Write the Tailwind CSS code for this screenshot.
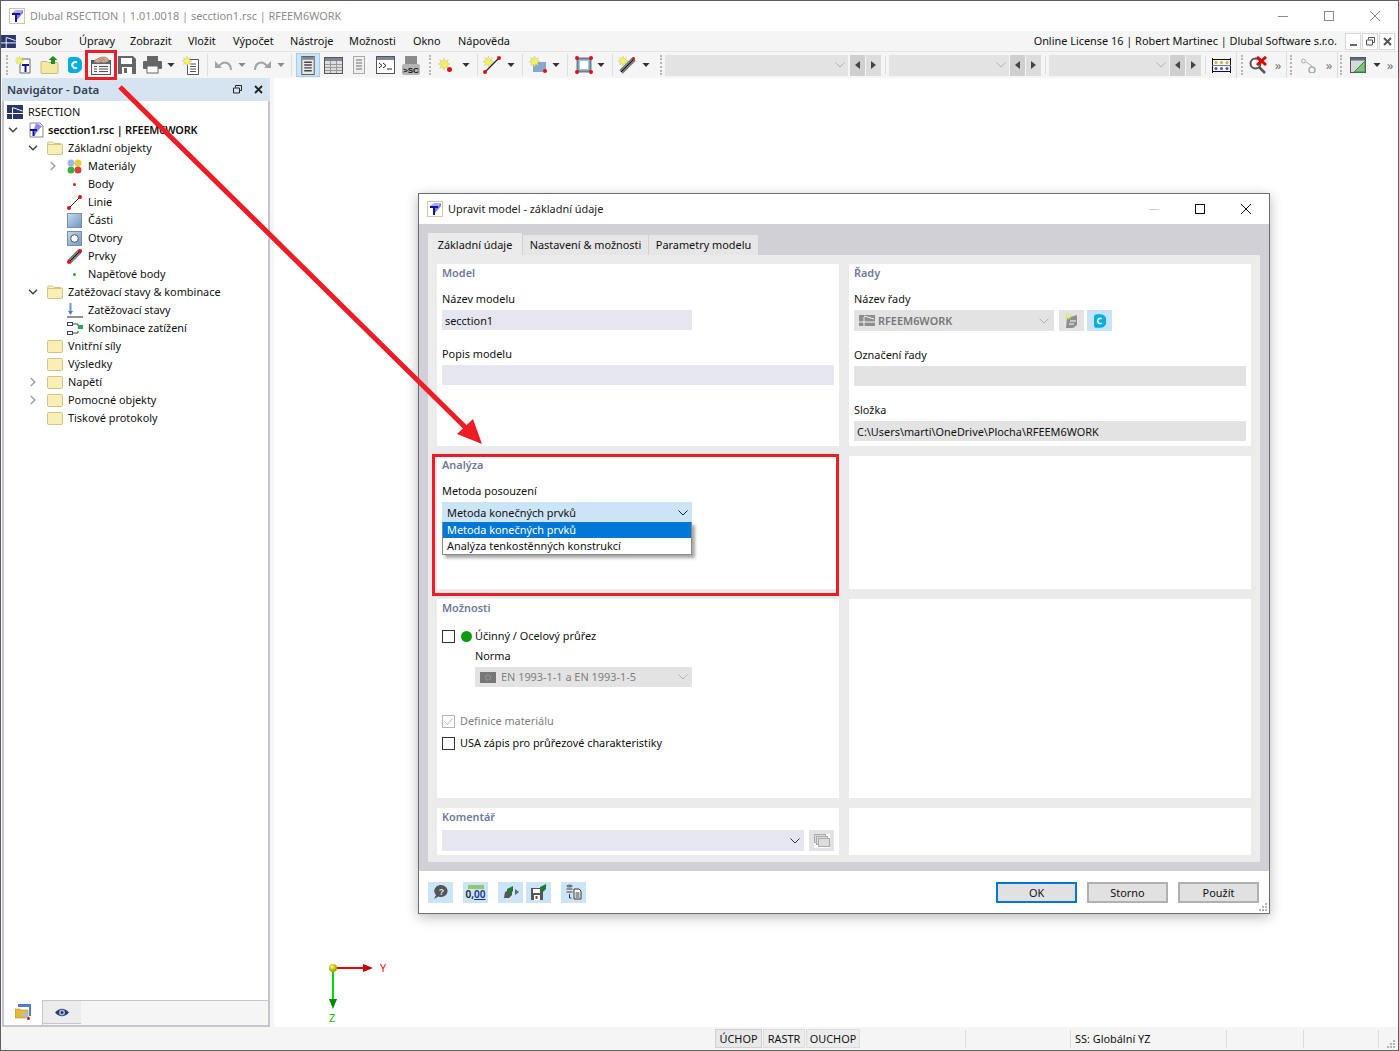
<!DOCTYPE html>
<html lang="cs">
  <head>
    <meta charset="UTF-8" />
    <meta name="viewport" content="width=device-width, initial-scale=1.0" />
    <script src="https://cdn.jsdelivr.net/npm/@tailwindcss/browser@4"></script>
    <title>Dlubal RSECTION</title>
  </head>
  <body class="overflow-hidden">
    <!-- shared icons -->
    <svg class="hidden">
      <symbol id="folder" viewBox="0 0 16 14"><path d="M.5 2.500q0-1 1-1h13q1 0 1 1v10q0 1-1 1h-13q-1 0-1-1z" fill="#f9efb4" stroke="#cfc38a"/></symbol>
      <symbol id="folderopen" viewBox="0 0 16 14"><path d="M.5 2q0-1 1-1h4l1.500 1.500h6.500q1 0 1 1v1.500h-11l-1 0z" fill="#fbf5cf" stroke="#cfc38a"/><path d="M.5 3.500h14.500q.5 0 .5 1v8.500q0 .5-.5.500h-13.500q-1 0-1-1z" fill="#f9efb4" stroke="#cfc38a"/></symbol>
      <symbol id="flag" viewBox="0 0 16 14"><rect width="16" height="14" y="0" fill="#28386e"/><path d="M0 8.500h16M5.500 3v11M5.500 2.500l10 3.500" stroke="#fff" fill="none"/></symbol>
      <symbol id="tlogo" viewBox="0 0 16 16"><rect x=".5" y=".5" width="15" height="15" fill="#fff" stroke="#dcc4a0"/><path d="M3 5l4-3h7l-3 3z" fill="#a9aaf0"/><path d="M11 5l3-3v3l-6 7V7z" fill="#7b7ce0"/><path d="M3 5h8v2H8v7H6V7H3z" fill="#16169c"/></symbol>
      <symbol id="dd" viewBox="0 0 9 5"><path d="M0 0h9L4.500 5z" fill="#333"/></symbol>
      <symbol id="ddg" viewBox="0 0 9 5"><path d="M0 0h9L4.500 5z" fill="#8a8a8a"/></symbol>
      <symbol id="chev" viewBox="0 0 10 6"><path d="M.5.500l4.500 4.500 4.500-4.500" fill="none" stroke="currentColor" stroke-width="1"/></symbol>
      <symbol id="treedown" viewBox="0 0 10 6"><path d="M1 .8l4 4 4-4" fill="none" stroke="#444" stroke-width="1.500"/></symbol>
      <symbol id="treeright" viewBox="0 0 6 10"><path d="M.8 1l4 4-4 4" fill="none" stroke="#a0a0a0" stroke-width="1.500"/></symbol>
      <symbol id="star" viewBox="0 0 14 14"><path d="M7 0l1.500 4L12 2l-1.500 3.500L14 7l-3.500 1.500L12 12 8.500 10.500 7 14l-1.500-3.500L2 12l1.500-3.500L0 7l3.500-1.500L2 2l3.500 2z" fill="#f6f25a" stroke="#b7b7a0" stroke-width=".5"/></symbol>
      <symbol id="cloud" viewBox="0 0 14 16"><path d="M3 0h5a6.500 8 0 0 1 0 16H3q-3 0-3-3V3q0-3 3-3z" fill="#00aee6"/><path d="M9 5.500a3 3 0 1 0 0 5" fill="none" stroke="#fff" stroke-width="2"/></symbol>
      <symbol id="save" viewBox="0 0 18 18"><path d="M0 0h15l3 3v15H0z" fill="#666"/><rect x="3" y="2" width="11" height="6" fill="#fff"/><rect x="4" y="11" width="10" height="7" fill="#fff"/><rect x="6" y="12" width="3" height="5" fill="#666"/></symbol>
      <symbol id="winlist" viewBox="0 0 14 20"><rect x=".5" y=".5" width="13" height="19" fill="#e9e9e9" stroke="#555"/><rect x="1" y="1" width="12" height="3" fill="#7d8896"/><path d="M3 6.500h8M3 9.500h8M3 12.500h8M3 15.500h8" stroke="#444" stroke-width="1.500"/></symbol>
      <symbol id="red" viewBox="0 0 4 4"><circle cx="2" cy="2" r="2" fill="#e01010"/></symbol>
    </svg>

    <div class="relative w-[1399px] h-[1051px] border border-[#5f5f5f] bg-[#f5f5f5] font-['Noto_Sans','Open_Sans',sans-serif] text-[10.9px] leading-[12px] text-[#111] flex flex-col overflow-hidden">
      <!-- title bar -->
      <div class="h-[30px] shrink-0 bg-white flex items-center pl-[8px]">
        <svg class="w-4 h-4 shrink-0"><use href="#tlogo" /></svg>
        <span class="ml-[5px] text-[#8c8c8c]">Dlubal RSECTION | 1.01.0018 | secction1.rsc | RFEEM6WORK</span>
        <div class="ml-auto flex items-center text-[#777]">
          <svg class="w-[46px] h-[12px]" viewBox="0 0 46 12"><path d="M18 6.500h10" stroke="#8a8a8a"/></svg>
          <svg class="w-[46px] h-[12px]" viewBox="0 0 46 12"><rect x="18.500" y="1.500" width="9" height="9" fill="none" stroke="#8a8a8a"/></svg>
          <svg class="w-[46px] h-[12px]" viewBox="0 0 46 12"><path d="M18 1l10 10M28 1L18 11" stroke="#8a8a8a"/></svg>
        </div>
      </div>

      <!-- menu bar -->
      <div class="h-[20px] shrink-0 flex items-center border-b border-[#e4e4e4] box-content">
        <svg class="w-[17px] h-[13px] shrink-0 -ml-px"><use href="#flag" /></svg>
        <div class="ml-[8px] flex">
          <span class="w-[54px]">Soubor</span><span class="w-[51px]">Úpravy</span><span class="w-[58px]">Zobrazit</span><span class="w-[45px]">Vložit</span><span class="w-[57px]">Výpočet</span><span class="w-[59px]">Nástroje</span><span class="w-[64px]">Možnosti</span><span class="w-[45px]">Okno</span><span>Nápověda</span>
        </div>
        <span class="ml-auto">Online License 16 | Robert Martinec | Dlubal Software s.r.o.</span>
        <div class="flex ml-[8px] mr-[3px] gap-px">
          <div class="w-[16px] h-[17px] border border-[#d8d8d8] bg-white flex items-end justify-center pb-[3px]"><i class="w-[7px] h-[2px] bg-[#666]"></i></div>
          <div class="w-[16px] h-[17px] border border-[#d8d8d8] bg-white flex items-center justify-center"><svg class="w-[9px] h-[9px]" viewBox="0 0 9 9"><path d="M2.500 2.500V.5h6v5h-2M.5 3h6v5h-6z" fill="none" stroke="#555"/></svg></div>
          <div class="w-[16px] h-[17px] border border-[#d8d8d8] bg-white flex items-center justify-center"><svg class="w-[9px] h-[9px]" viewBox="0 0 9 9"><path d="M1 1l7 7M8 1L1 8" stroke="#555" stroke-width="2"/></svg></div>
        </div>
      </div>

      <!-- toolbar -->
      <div class="h-[26px] shrink-0 flex items-center *:shrink-0">
        <div class="w-[11px] flex justify-center"><i class="w-[2px] h-[20px] border-l-2 border-dotted border-[#b5b5b5]"></i></div>
        <div class="w-[24px] flex justify-center"><svg class="w-[18px] h-[18px]" viewBox="0 0 18 18"><path d="M5 3h10v14H5z" fill="#fff" stroke="#666"/><path d="M7 8h7v2h-2.500v6h-2v-6H7z" fill="#16169c"/><use href="#star" width="9" height="9" x="0" y="0"/></svg></div>
        <div class="w-[26px] flex justify-center"><svg class="w-[19px] h-[18px]" viewBox="0 0 19 18"><path d="M1 6.500q0-1 1-1h5l1 1h9q1 0 1 1v9q0 1-1 1H2q-1 0-1-1z" fill="#f4e9a3" stroke="#c7bb7e"/><path d="M11 8V4H8.500L13 0l4.500 4H15v4z" fill="#1e8e1e"/></svg></div>
        <div class="w-[26px] flex justify-center"><svg class="w-[14px] h-[16px]"><use href="#cloud" /></svg></div>
        <div class="w-[25px] flex justify-center"><svg class="w-[20px] h-[19px]" viewBox="0 0 20 19"><rect x=".5" y="4.500" width="19" height="14" fill="#f2f2f2" stroke="#555"/><rect x="1" y="5" width="18" height="3" fill="#52677f"/><path d="M3 10.500h3M3 13h3M3 15.500h3M8 10.500h9M8 13h9M8 15.500h9" stroke="#555" stroke-width="1.200"/><path d="M3 6q0-2 3-3 3-2 6-2 3 0 4 1l2 2q0 2-2 2l-3 1-3-1-3 1-3-.5z" fill="#cda98d" stroke="#8c6e56" stroke-width=".6"/><path d="M8 3l3 2M11 2.500l3 2" stroke="#8c6e56" stroke-width=".6"/></svg></div>
        <div class="w-[28px] flex justify-center"><svg class="w-[18px] h-[18px]"><use href="#save" /></svg></div>
        <div class="w-[22px] flex justify-center"><svg class="w-[19px] h-[18px]" viewBox="0 0 19 18"><rect x="4" y="0" width="11" height="5" fill="#666"/><rect x="0" y="5" width="19" height="8" rx="1" fill="#666"/><rect x="4" y="10" width="11" height="7" fill="#fff" stroke="#666"/></svg></div>
        <div class="w-[16px] flex justify-center"><svg class="w-[8px] h-[4px]"><use href="#dd" /></svg></div>
        <div class="w-[24px] flex justify-center"><svg class="w-[18px] h-[19px]" viewBox="0 0 18 19"><path d="M5.500 3.500h11v15h-11z" fill="#fff" stroke="#555"/><path d="M8 8h6M8 10.500h6M8 13h6M8 15.500h6" stroke="#555"/><use href="#star" width="10" height="10" x="0" y="0"/></svg></div>
        <div class="w-[8px] flex justify-center"><i class="w-px h-[22px] bg-[#dedede]"></i></div>
        <div class="w-[24px] flex justify-center"><svg class="w-[17px] h-[11px]" viewBox="0 0 17 11"><path d="M4 6q4-5 8-3t4 7" fill="none" stroke="#a3a3a3" stroke-width="2"/><path d="M0 1v7h7z" fill="#a3a3a3"/></svg></div>
        <div class="w-[14px] flex justify-center"><svg class="w-[8px] h-[4px]"><use href="#ddg" /></svg></div>
        <div class="w-[26px] flex justify-center"><svg class="w-[17px] h-[11px]" viewBox="0 0 17 11"><path d="M13 6Q9 1 5 3t-4 7" fill="none" stroke="#a3a3a3" stroke-width="2"/><path d="M17 1v7h-7z" fill="#a3a3a3"/></svg></div>
        <div class="w-[11px] flex justify-center"><svg class="w-[8px] h-[4px]"><use href="#ddg" /></svg></div>
        <div class="w-[10px] flex justify-center"><i class="w-px h-[22px] bg-[#dedede]"></i></div>
        <div class="w-[24px] h-[24px] bg-[#cce4f7] border border-[#a3cdef] flex justify-center items-center"><svg class="w-[14px] h-[19px]"><use href="#winlist" /></svg></div>
        <div class="w-[26px] flex justify-center"><svg class="w-[19px] h-[17px]" viewBox="0 0 19 17"><rect x=".5" y=".5" width="18" height="16" fill="#ddd" stroke="#555"/><rect x="1" y="1" width="17" height="3" fill="#7d8896"/><path d="M1 7.500h17M1 10.500h17M1 13.500h17M6.500 4v12M12.500 4v12" stroke="#999"/></svg></div>
        <div class="w-[26px] flex justify-center"><svg class="w-[12px] h-[18px]" viewBox="0 0 12 18"><rect x=".5" y=".5" width="11" height="17" fill="#eee" stroke="#aaa"/><path d="M3 4h6M3 7h6M3 10h6M3 13h6" stroke="#999" stroke-width="1.500"/></svg></div>
        <div class="w-[26px] flex justify-center"><svg class="w-[19px] h-[18px]" viewBox="0 0 19 18"><rect x=".5" y=".5" width="18" height="17" fill="#fff" stroke="#555"/><rect x="1" y="1" width="17" height="3" fill="#7d8896"/><path d="M3 7l3 2.500L3 12M7 7l3 2.500L7 12M11 13h5" fill="none" stroke="#222"/></svg></div>
        <div class="w-[26px] flex justify-center"><svg class="w-[18px] h-[19px]" viewBox="0 0 18 19"><rect x="3" y="0" width="12" height="10" fill="#8b8b8b"/><rect x="0" y="8" width="18" height="11" rx="2" fill="#b5b5b5"/><text x="9" y="17" text-anchor="middle" font-size="8" font-weight="700" fill="#111" font-family="Liberation Sans">&gt;SC</text></svg></div>
        <div class="w-[12px] flex justify-center"><i class="w-[2px] h-[20px] border-l-2 border-dotted border-[#b5b5b5]"></i></div>
        <div class="w-[18px] flex justify-center"><svg class="w-[15px] h-[15px]" viewBox="0 0 15 15"><use href="#star" width="12" height="12"/><use href="#red" x="9" y="9" width="5" height="5"/></svg></div>
        <div class="w-[20px] pl-[4px] flex justify-center"><svg class="w-[8px] h-[4px]"><use href="#dd" /></svg></div>
        <div class="w-[6px] flex justify-center"><i class="w-px h-[22px] bg-[#dedede]"></i></div>
        <div class="w-[24px] flex justify-center"><svg class="w-[18px] h-[18px]" viewBox="0 0 18 18"><use href="#star" width="11" height="11"/><path d="M2 16L16 2" stroke="#222" stroke-width="1.300"/><use href="#red" x="0" y="14" width="4" height="4"/><use href="#red" x="14" y="0" width="4" height="4"/></svg></div>
        <div class="w-[14px] flex justify-center"><svg class="w-[8px] h-[4px]"><use href="#dd" /></svg></div>
        <div class="w-[8px] flex justify-center"><i class="w-px h-[22px] bg-[#dedede]"></i></div>
        <div class="w-[24px] flex justify-center"><svg class="w-[18px] h-[18px]" viewBox="0 0 18 18"><rect x="4" y="6" width="13" height="10" fill="#86a9cf"/><use href="#star" width="11" height="11"/><use href="#red" x="14" y="13" width="4" height="4"/></svg></div>
        <div class="w-[12px] flex justify-center"><svg class="w-[8px] h-[4px]"><use href="#dd" /></svg></div>
        <div class="w-[10px] flex justify-center"><i class="w-px h-[22px] bg-[#dedede]"></i></div>
        <div class="w-[24px] flex justify-center"><svg class="w-[18px] h-[18px]" viewBox="0 0 18 18"><rect x="2.500" y="2.500" width="13" height="13" fill="#9fc0dd" stroke="#6b7f92" stroke-width="2"/><rect x="5" y="5" width="8" height="8" fill="#fff"/><use href="#red" x="0" y="0" width="4" height="4"/><use href="#red" x="14" y="0" width="4" height="4"/><use href="#red" x="0" y="14" width="4" height="4"/><use href="#red" x="14" y="14" width="4" height="4"/></svg></div>
        <div class="w-[10px] flex justify-center"><svg class="w-[8px] h-[4px]"><use href="#dd" /></svg></div>
        <div class="w-[12px] flex justify-center"><i class="w-px h-[22px] bg-[#dedede]"></i></div>
        <div class="w-[18px] flex justify-center"><svg class="w-[18px] h-[18px]" viewBox="0 0 18 18"><use href="#star" width="10" height="10"/><path d="M3 16L16 3" stroke="#777" stroke-width="5"/><path d="M3 16L16 3" stroke="#111"/><use href="#red" x="14" y="1" width="3" height="3"/></svg></div>
        <div class="w-[20px] flex justify-center"><svg class="w-[8px] h-[4px]"><use href="#dd" /></svg></div>
        <div class="w-[9px] flex justify-center"><i class="w-[2px] h-[20px] border-l-2 border-dotted border-[#b5b5b5]"></i></div>

        <div class="w-[183px] h-[21px] bg-[#e3e3e3] flex items-center justify-end pr-[2px] text-[#b0b0b0]"><svg class="w-[10px] h-[6px] mr-[1px]"><use href="#chev" /></svg></div>
        <div class="ml-[2px] w-[15px] h-[21px] bg-[#cfcfcf] flex items-center justify-center"><svg class="w-[5px] h-[8px]" viewBox="0 0 5 8"><path d="M5 0v8L0 4z" fill="#444"/></svg></div>
        <div class="ml-px w-[15px] h-[21px] bg-[#dcdcdc] flex items-center justify-center"><svg class="w-[5px] h-[8px]" viewBox="0 0 5 8"><path d="M0 0v8l5-4z" fill="#444"/></svg></div>
        <div class="w-[8px] flex justify-center"><i class="w-px h-[18px] bg-[#dedede]"></i></div>
        <div class="w-[120px] h-[21px] bg-[#e3e3e3] flex items-center justify-end pr-[2px] text-[#b0b0b0]"><svg class="w-[10px] h-[6px] mr-[1px]"><use href="#chev" /></svg></div>
        <div class="ml-px w-[15px] h-[21px] bg-[#cfcfcf] flex items-center justify-center"><svg class="w-[5px] h-[8px]" viewBox="0 0 5 8"><path d="M5 0v8L0 4z" fill="#444"/></svg></div>
        <div class="ml-px w-[15px] h-[21px] bg-[#dcdcdc] flex items-center justify-center"><svg class="w-[5px] h-[8px]" viewBox="0 0 5 8"><path d="M0 0v8l5-4z" fill="#444"/></svg></div>
        <div class="w-[8px] flex justify-center"><i class="w-px h-[18px] bg-[#dedede]"></i></div>
        <div class="w-[120px] h-[21px] bg-[#e3e3e3] flex items-center justify-end pr-[2px] text-[#b0b0b0]"><svg class="w-[10px] h-[6px] mr-[1px]"><use href="#chev" /></svg></div>
        <div class="ml-px w-[15px] h-[21px] bg-[#cfcfcf] flex items-center justify-center"><svg class="w-[5px] h-[8px]" viewBox="0 0 5 8"><path d="M5 0v8L0 4z" fill="#444"/></svg></div>
        <div class="ml-px w-[15px] h-[21px] bg-[#dcdcdc] flex items-center justify-center"><svg class="w-[5px] h-[8px]" viewBox="0 0 5 8"><path d="M0 0v8l5-4z" fill="#444"/></svg></div>
        <div class="w-[8px] flex justify-center"><i class="w-px h-[18px] bg-[#dedede]"></i></div>
        <div class="w-[26px] flex justify-center"><svg class="w-[19px] h-[15px] -ml-[2px]" viewBox="0 0 19 15"><path d="M.5 0v15M18.500 0v15M0 1.500h19M0 13.500h19" stroke="#111"/><path d="M0 7.500h19" stroke="#777"/><g fill="#c8b23c"><circle cx="4" cy="4.500" r="1.500"/><circle cx="9.500" cy="4.500" r="1.500"/><circle cx="15" cy="4.500" r="1.500"/></g><g fill="#3e57c4"><circle cx="4" cy="10.500" r="1.500"/><circle cx="9.500" cy="10.500" r="1.500"/><circle cx="15" cy="10.500" r="1.500"/></g></svg></div>
        <div class="w-[3px] flex justify-center"><i class="w-px h-[26px] bg-[#dedede]"></i></div>
        <div class="w-[7px] flex justify-center"><i class="w-[2px] h-[20px] border-l-2 border-dotted border-[#b5b5b5]"></i></div>
        <div class="w-[26px] flex justify-center"><svg class="w-[19px] h-[18px]" viewBox="0 0 19 18"><circle cx="6.500" cy="7.500" r="5" fill="#fff" stroke="#555" stroke-width="2"/><path d="M10 11l6 6" stroke="#555" stroke-width="2.500"/><path d="M8 1l9 8M17 1L8 9" stroke="#e00000" stroke-width="3"/></svg></div>
        <span class="w-[14px] text-center text-[#777] text-[13px]">»</span>
        <div class="w-[3px] flex justify-center"><i class="w-px h-[26px] bg-[#dedede]"></i></div>
        <div class="w-[6px] flex justify-center"><i class="w-[2px] h-[20px] border-l-2 border-dotted border-[#b5b5b5]"></i></div>
        <div class="w-[28px] flex justify-center"><svg class="w-[15px] h-[15px]" viewBox="0 0 15 15"><circle cx="2.500" cy="3" r="2" fill="none" stroke="#aaa"/><circle cx="11" cy="12" r="3" fill="none" stroke="#aaa" stroke-width="1.500"/><path d="M5 4l6 4" stroke="#aaa"/></svg></div>
        <span class="w-[14px] text-center text-[#777] text-[13px]">»</span>
        <div class="w-[2px] flex justify-center"><i class="w-px h-[26px] bg-[#dedede]"></i></div>
        <div class="w-[6px] flex justify-center"><i class="w-[2px] h-[20px] border-l-2 border-dotted border-[#b5b5b5]"></i></div>
        <div class="w-[28px] flex justify-center"><svg class="w-[16px] h-[16px]" viewBox="0 0 16 16"><rect x=".5" y=".5" width="15" height="15" fill="#d8d8d8" stroke="#555"/><rect x="1" y="1" width="14" height="2.500" fill="#5a6d80"/><path d="M15 4v11H4z" fill="#7dc27d" stroke="#3d8a3d"/></svg></div>
        <div class="w-[10px] flex justify-center"><svg class="w-[8px] h-[4px]"><use href="#dd" /></svg></div>
        <span class="w-[16px] text-center text-[#777] text-[13px]">»</span>
      </div>

      <!-- main area -->
      <div class="flex-1 min-h-0 flex pl-px">
        <!-- navigator panel -->
        <div class="w-[268px] shrink-0 flex flex-col">
          <div class="h-[23px] shrink-0 bg-[#d6e4f1] flex items-center pl-[5px]">
            <span class="font-semibold text-[#36404f] text-[11.5px]">Navigátor - Data</span>
            <svg class="ml-auto w-[9px] h-[9px]" viewBox="0 0 9 9"><path d="M2.500 2.500V.5h6v5h-2M.5 3h6v5h-6z" fill="none" stroke="#222"/></svg>
            <svg class="ml-[12px] mr-[7px] w-[9px] h-[9px]" viewBox="0 0 9 9"><path d="M1 1l7 7M8 1L1 8" stroke="#222" stroke-width="1.800"/></svg>
          </div>
          <div class="flex-1 min-h-0 bg-white border-x-2 border-[#c5c5d2] pt-[2px]">
            <div class="h-[18px] flex items-center pl-[3px]"><svg class="w-4 h-[14px]"><use href="#flag" /></svg><span class="ml-[5px]">RSECTION</span></div>
            <div class="h-[18px] flex items-center pl-[4px]"><svg class="w-[10px] h-[6px]"><use href="#treedown" /></svg><svg class="ml-[11px] w-[15px] h-[16px]" viewBox="0 0 15 16"><path d="M1 1h10l3 3v11H1z" fill="#fff" stroke="#888"/><path d="M7 1l6 3-8 10V7z" fill="#8c8ce8"/><path d="M1 7h7v2H5.500v5h-2V9H1z" fill="#16169c"/></svg><span class="ml-[4px] font-semibold tracking-[-0.2px]">secction1.rsc | RFEEM6WORK</span></div>
            <div class="h-[18px] flex items-center pl-[24px]"><svg class="w-[10px] h-[6px]"><use href="#treedown" /></svg><svg class="ml-[9px] w-4 h-[14px]"><use href="#folderopen" /></svg><span class="ml-[5px]">Základní objekty</span></div>
            <div class="h-[18px] flex items-center pl-[46px]"><svg class="w-[6px] h-[10px]"><use href="#treeright" /></svg><svg class="ml-[11px] w-[15px] h-[15px]" viewBox="0 0 15 15"><circle cx="4" cy="4" r="3.500" fill="#a0b4e8"/><circle cx="11" cy="4" r="3.500" fill="#e6d03c"/><circle cx="4" cy="11" r="3.500" fill="#3cae3c"/><circle cx="11" cy="11" r="3.500" fill="#d84040"/></svg><span class="ml-[6px]">Materiály</span></div>
            <div class="h-[18px] flex items-center pl-[69px]"><i class="w-[3px] h-[3px] rounded-full bg-[#e01818]"></i><span class="ml-[12px]">Body</span></div>
            <div class="h-[18px] flex items-center pl-[63px]"><svg class="w-[15px] h-[15px]" viewBox="0 0 15 15"><path d="M2 13L13 2" stroke="#333"/><use href="#red" x="0" y="11" width="4" height="4"/><use href="#red" x="11" y="0" width="4" height="4"/></svg><span class="ml-[6px]">Linie</span></div>
            <div class="h-[18px] flex items-center pl-[63px]"><svg class="w-[15px] h-[15px]" viewBox="0 0 15 15"><defs><linearGradient id="pt" x2="1" y2="1"><stop stop-color="#c9dcee"/><stop offset="1" stop-color="#6f95bf"/></linearGradient></defs><rect x=".5" y=".5" width="14" height="14" fill="url(#pt)" stroke="#7790ab"/></svg><span class="ml-[6px]">Části</span></div>
            <div class="h-[18px] flex items-center pl-[63px]"><svg class="w-[15px] h-[15px]" viewBox="0 0 15 15"><rect x=".5" y=".5" width="14" height="14" fill="url(#pt)" stroke="#7790ab"/><circle cx="7.500" cy="7.500" r="3.800" fill="#fff" stroke="#555"/></svg><span class="ml-[6px]">Otvory</span></div>
            <div class="h-[18px] flex items-center pl-[63px]"><svg class="w-[15px] h-[15px]" viewBox="0 0 15 15"><path d="M2 13L13 2" stroke="#7a7a7a" stroke-width="5"/><path d="M2 13L13 2" stroke="#111"/><use href="#red" x="0" y="11" width="4" height="4"/><use href="#red" x="11" y="0" width="4" height="4"/></svg><span class="ml-[6px]">Prvky</span></div>
            <div class="h-[18px] flex items-center pl-[69px]"><i class="w-[3px] h-[3px] rounded-full bg-[#18b018]"></i><span class="ml-[12px]">Napěťové body</span></div>
            <div class="h-[18px] flex items-center pl-[24px]"><svg class="w-[10px] h-[6px]"><use href="#treedown" /></svg><svg class="ml-[9px] w-4 h-[14px]"><use href="#folderopen" /></svg><span class="ml-[5px]">Zatěžovací stavy &amp; kombinace</span></div>
            <div class="h-[18px] flex items-center pl-[63px]"><svg class="w-4 h-[15px]" viewBox="0 0 16 15"><path d="M3.500 0v9" stroke="#6f95cf" stroke-width="2"/><path d="M1 8h5l-2.500 4z" fill="#4a7cc8"/><path d="M0 14h16" stroke="#222"/></svg><span class="ml-[5px]">Zatěžovací stavy</span></div>
            <div class="h-[18px] flex items-center pl-[63px]"><svg class="w-4 h-[15px]" viewBox="0 0 16 15"><rect x=".5" y="1.500" width="5" height="3" fill="#fff" stroke="#444"/><rect x=".5" y="10.500" width="5" height="3" fill="#fff" stroke="#444"/><path d="M6 3h5v2M6 12h5v-2" fill="none" stroke="#444"/><path d="M11 4h5v4h-5z" fill="#22b04c"/></svg><span class="ml-[5px]">Kombinace zatížení</span></div>
            <div class="h-[18px] flex items-center pl-[43px]"><svg class="w-4 h-[14px]"><use href="#folder" /></svg><span class="ml-[5px]">Vnitřní síly</span></div>
            <div class="h-[18px] flex items-center pl-[43px]"><svg class="w-4 h-[14px]"><use href="#folder" /></svg><span class="ml-[5px]">Výsledky</span></div>
            <div class="h-[18px] flex items-center pl-[26px]"><svg class="w-[6px] h-[10px]"><use href="#treeright" /></svg><svg class="ml-[11px] w-4 h-[14px]"><use href="#folder" /></svg><span class="ml-[5px]">Napětí</span></div>
            <div class="h-[18px] flex items-center pl-[26px]"><svg class="w-[6px] h-[10px]"><use href="#treeright" /></svg><svg class="ml-[11px] w-4 h-[14px]"><use href="#folder" /></svg><span class="ml-[5px]">Pomocné objekty</span></div>
            <div class="h-[18px] flex items-center pl-[43px]"><svg class="w-4 h-[14px]"><use href="#folder" /></svg><span class="ml-[5px]">Tiskové protokoly</span></div>
          </div>
          <div class="h-[27px] shrink-0 flex border-x-2 border-b-2 border-[#c5c5d2]">
            <div class="w-[38px] bg-white flex items-center justify-center -mt-px"><svg class="w-4 h-4" viewBox="0 0 16 16"><path d="M3 0h13v12h-2V3H3z" fill="#4f80cf"/><path d="M0 5h5l1 1h7v8H0z" fill="#e6b93c" stroke="#a98526" stroke-width=".5"/><path d="M6 10l5-1 3 4-3 1z" fill="#9cc4ea"/><use href="#red" x="12" y="13" width="3" height="3"/></svg></div>
            <div class="flex-1 border-t border-l border-[#c5c5d2]">
              <div class="w-[38px] h-[23px] bg-[#ececec] border-b border-[#c5c5d2] flex items-center justify-center"><svg class="w-[14px] h-[9px]" viewBox="0 0 14 9"><path d="M0 4.500Q7-3 14 4.500 7 12 0 4.500z" fill="#2c3c70"/><circle cx="7" cy="4.500" r="3" fill="#9db5e8"/><circle cx="7" cy="4.500" r="1.300" fill="#1c2750"/></svg></div>
            </div>
          </div>
        </div>
        <!-- workspace -->
        <div class="ml-[4px] flex-1 bg-white h-[949px]"></div>
      </div>

      <!-- status bar -->
      <div class="h-[23px] shrink-0 flex items-center relative">
        <div class="ml-[714px] flex h-[19px] items-center gap-px">
          <span class="h-[19px] w-[47px] flex items-center justify-center bg-[#e8e8e8] border border-[#d0d0d0]">ÚCHOP</span>
          <span class="h-[19px] w-[42px] flex items-center justify-center bg-[#ececec] border border-[#dcdcdc]">RASTR</span>
          <span class="h-[19px] w-[54px] flex items-center justify-center bg-[#ececec] border border-[#dcdcdc]">OUCHOP</span>
        </div>
        <i class="ml-[105px] w-px h-[18px] bg-[#dcdcdc]"></i>
        <i class="ml-[104px] w-px h-[18px] bg-[#dcdcdc]"></i>
        <span class="ml-[4px] w-[151px]">SS: Globální YZ</span>
        <i class="w-px h-[18px] bg-[#dcdcdc]"></i>
        <i class="ml-[76px] w-px h-[18px] bg-[#dcdcdc]"></i>
        <i class="ml-[74px] w-px h-[18px] bg-[#dcdcdc]"></i>
        <svg class="ml-auto mr-[3px] w-[8px] h-[8px] self-end mb-[2px]" viewBox="0 0 8 8"><path d="M6 0h2v2H6zM3 3h2v2H3zM6 3h2v2H6zM0 6h2v2H0zM3 6h2v2H3zM6 6h2v2H6z" fill="#b5b5b5"/></svg>
      </div>

      <!-- coordinate axes -->
      <svg class="absolute left-[320px] top-[955px] w-[75px] h-[70px]" viewBox="0 0 75 70">
        <defs><radialGradient id="ball" cx=".4" cy=".35"><stop stop-color="#ffff60"/><stop offset="1" stop-color="#a8a800"/></radialGradient></defs>
        <path d="M12 12H43" stroke="#f00000" stroke-width="2"/><path d="M42 8l10 4-10 4z" fill="#c80000"/>
        <path d="M12 12V44" stroke="#00e000" stroke-width="2"/><path d="M8 43l4 10 4-10z" fill="#008c00"/>
        <circle cx="12" cy="12" r="4" fill="url(#ball)"/>
        <text x="59" y="16" font-size="11" fill="#ff1010" font-family="Noto Sans">Y</text>
        <text x="8" y="66" font-size="11" fill="#10c010" font-family="Noto Sans">Z</text>
      </svg>

      <!-- dialog window -->
      <div class="absolute left-[417px] top-[192px] w-[852px] h-[721px] bg-white border border-[#6e6e6e] shadow-[0_3px_12px_rgba(0,0,0,0.28)] flex flex-col">
        <div class="h-[30px] shrink-0 flex items-center pl-[8px]">
          <svg class="w-4 h-4"><use href="#tlogo" /></svg>
          <span class="ml-[5px] text-[#222]">Upravit model - základní údaje</span>
          <div class="ml-auto flex items-center">
            <svg class="w-[46px] h-[12px]" viewBox="0 0 46 12"><path d="M18 6.500h10" stroke="#c8c8c8"/></svg>
            <svg class="w-[46px] h-[12px]" viewBox="0 0 46 12"><rect x="18.500" y="1.500" width="9" height="9" fill="none" stroke="#111"/></svg>
            <svg class="w-[46px] h-[12px]" viewBox="0 0 46 12"><path d="M18 1l10 10M28 1L18 11" stroke="#111"/></svg>
          </div>
        </div>

        <div class="h-[647px] shrink-0 bg-[#d0d0d6] px-[9px] pt-[10px] flex flex-col">
          <div class="flex items-end h-[21px] shrink-0">
            <div class="w-[94px] h-[22px] pt-[2px] bg-[#ebebeb] flex items-center justify-center">Základní údaje</div>
            <div class="ml-px w-[125px] h-[20px] bg-[#e6e6e6] flex items-center justify-center">Nastavení &amp; možnosti</div>
            <div class="ml-px w-[109px] h-[20px] bg-[#e6e6e6] flex items-center justify-center">Parametry modelu</div>
          </div>
          <div class="h-[607px] bg-[#ebebeb] pt-[9px] px-[9px] grid grid-cols-[402px_402px] grid-rows-[182px_133px_199px_47px] gap-[10px]">
            <!-- model -->
            <div class="bg-white px-[5px] pt-[3px]">
              <div class="font-semibold text-[#6e7b99] h-[12px]">Model</div>
              <div class="mt-[14px] h-[12px]">Název modelu</div>
              <div class="mt-[5px] w-[250px] h-[20px] bg-[#e6e6f0] flex items-center pl-[3px] pt-px">secction1</div>
              <div class="mt-[18px] h-[12px]">Popis modelu</div>
              <div class="mt-[5px] w-[392px] h-[20px] bg-[#e6e6f0]"></div>
            </div>
            <!-- rady -->
            <div class="bg-white px-[5px] pt-[3px]">
              <div class="font-semibold text-[#6e7b99] h-[12px]">Řady</div>
              <div class="mt-[14px] h-[12px]">Název řady</div>
              <div class="mt-[5px] flex gap-[5px]">
                <div class="w-[200px] h-[21px] bg-[#e3e3e3] flex items-center pl-[5px] text-[#777] font-semibold">
                  <svg class="w-4 h-[11px] opacity-60" viewBox="0 0 16 11"><rect width="16" height="11" fill="#555"/><path d="M0 7h16M5 2v9M5 1l10 3" stroke="#fff" fill="none"/></svg>
                  <span class="ml-[3px]">RFEEM6WORK</span>
                  <svg class="ml-auto mr-[5px] w-[10px] h-[6px] text-[#b0b0b0]"><use href="#chev" /></svg>
                </div>
                <div class="w-[25px] h-[21px] bg-[#e3e3e3] flex items-center justify-center"><svg class="w-4 h-4" viewBox="0 0 16 16"><path d="M3 5l10-3v10l-4 3H2z" fill="#8e8e8e"/><path d="M6 8h6M5 11h5" stroke="#fff"/><use href="#star" width="7" height="7" x="1" y="0" opacity=".7"/></svg></div>
                <div class="-ml-[2px] w-[25px] h-[21px] bg-[#c8e2f6] flex items-center justify-center"><svg class="w-[12px] h-[14px]"><use href="#cloud" /></svg></div>
              </div>
              <div class="mt-[18px] h-[12px]">Označení řady</div>
              <div class="mt-[5px] w-[392px] h-[20px] bg-[#e3e3e3]"></div>
              <div class="mt-[18px] h-[12px]">Složka</div>
              <div class="mt-[5px] w-[392px] h-[20px] bg-[#e3e3e3] flex items-center pl-[3px] pt-px">C:\Users\marti\OneDrive\Plocha\RFEEM6WORK</div>
            </div>
            <!-- analyza -->
            <div class="bg-white px-[5px] pt-[3px] relative">
              <div class="font-semibold text-[#6e7b99] h-[12px]">Analýza</div>
              <div class="mt-[14px] h-[12px]">Metoda posouzení</div>
              <div class="mt-[5px] w-[250px] h-[20px] bg-[#cce4f7] flex items-center pl-[5px] pt-px">
                Metoda konečných prvků
                <svg class="ml-auto mr-[4px] w-[10px] h-[6px] text-[#222]"><use href="#chev" /></svg>
              </div>
              <div class="absolute left-[5px] top-[66px] w-[250px] h-[33px] bg-white border border-[#8a8a8a] border-t-0 shadow-[3px_3px_3px_rgba(0,0,0,0.35)]">
                <div class="h-[16px] bg-[#0078d7] text-white flex items-center pl-[4px]">Metoda konečných prvků</div>
                <div class="h-[16px] flex items-center pl-[4px]">Analýza tenkostěnných konstrukcí</div>
              </div>
            </div>
            <div class="bg-white"></div>
            <!-- moznosti -->
            <div class="bg-white px-[5px] pt-[3px]">
              <div class="font-semibold text-[#6e7b99] h-[12px]">Možnosti</div>
              <div class="mt-[15px] flex items-center h-[14px]">
                <i class="w-[13px] h-[13px] border border-[#333] bg-white"></i>
                <i class="ml-[6px] w-[11px] h-[11px] rounded-full bg-[#0f9a14]"></i>
                <span class="ml-[3px]">Účinný / Ocelový průřez</span>
              </div>
              <div class="mt-[7px] ml-[33px] h-[12px]">Norma</div>
              <div class="mt-[5px] ml-[33px] w-[217px] h-[20px] bg-[#e3e3e3] flex items-center pl-[5px] text-[#808080]">
                <svg class="w-4 h-[11px]" viewBox="0 0 16 11"><rect width="16" height="11" fill="#777"/><circle cx="8" cy="5.500" r="2.500" fill="none" stroke="#bbb" stroke-dasharray="1 1"/></svg>
                <span class="ml-[5px]">EN 1993-1-1 a EN 1993-1-5</span>
                <svg class="ml-auto mr-[4px] w-[10px] h-[6px] text-[#b0b0b0]"><use href="#chev" /></svg>
              </div>
              <div class="mt-[27px] flex items-center h-[14px]">
                <svg class="w-[13px] h-[13px]" viewBox="0 0 13 13"><rect x=".5" y=".5" width="12" height="12" fill="#fff" stroke="#b5b5b5"/><path d="M2.500 6.500l3 3 5-6" fill="none" stroke="#b5b5b5"/></svg>
                <span class="ml-[5px] text-[#808080]">Definice materiálu</span>
              </div>
              <div class="mt-[8px] flex items-center h-[14px]">
                <i class="w-[13px] h-[13px] border border-[#333] bg-white"></i>
                <span class="ml-[5px]">USA zápis pro průřezové charakteristiky</span>
              </div>
            </div>
            <div class="bg-white"></div>
            <!-- komentar -->
            <div class="bg-white px-[5px] pt-[3px]">
              <div class="font-semibold text-[#6e7b99] h-[12px]">Komentář</div>
              <div class="mt-[7px] flex gap-[5px]">
                <div class="w-[362px] h-[21px] bg-[#e6e6f0] flex items-center justify-end pr-[4px] text-[#333]"><svg class="w-[10px] h-[6px]"><use href="#chev" /></svg></div>
                <div class="w-[25px] h-[21px] bg-[#e3e3e3] flex items-center justify-center"><svg class="w-4 h-[14px]" viewBox="0 0 16 14"><rect width="16" height="14" fill="#fff"/><rect x=".5" y=".5" width="11" height="8" fill="#ddd" stroke="#aaa"/><rect x="2.500" y="2.500" width="11" height="8" fill="#ddd" stroke="#aaa"/><rect x="4.500" y="4.500" width="11" height="8" fill="#ddd" stroke="#aaa"/></svg></div>
              </div>
            </div>
            <div class="bg-white"></div>
          </div>
        </div>

        <!-- dialog footer -->
        <div class="flex-1 flex items-center pl-[9px] pr-[10px] relative">
          <div class="w-[25px] h-[21px] bg-[#cce4f7] flex items-center justify-center"><svg class="w-[14px] h-[14px]" viewBox="0 0 14 14"><path d="M7.500 0a6.500 6 0 1 1-3 11.500L0 14l2-4A6.500 6 0 0 1 7.500 0z" fill="#555"/><text x="7.500" y="10" text-anchor="middle" font-size="9" font-weight="700" fill="#cce4f7" font-family="Liberation Sans">?</text></svg></div>
          <div class="ml-[10px] w-[25px] h-[21px] bg-[#cce4f7] flex flex-col items-center justify-center">
            <i class="w-[16px] h-[4px] bg-[#8fca6e]"></i>
            <span class="text-[10px] font-semibold text-[#222] leading-[11px]">0,<span class="text-[#1a2f8c] underline">00</span></span>
          </div>
          <div class="ml-[10px] w-[25px] h-[21px] bg-[#cce4f7] flex items-center justify-center"><svg class="w-[16px] h-[12px]" viewBox="0 0 16 12"><path d="M2 6l7-3v6l-3 3H1z" fill="#555"/><path d="M4 3l6-3v5l-2 2-4 1z" fill="#1f7a3a"/><path d="M12 3l4 3-4 3z" fill="#666"/></svg></div>
          <div class="ml-[3px] w-[25px] h-[21px] bg-[#cce4f7] flex items-center justify-center"><svg class="w-[16px] h-[16px]" viewBox="0 0 16 16"><path d="M0 4h11l1 1v11H0z" fill="#555"/><rect x="2" y="5" width="7" height="4" fill="#fff"/><rect x="3" y="11" width="6" height="5" fill="#fff"/><rect x="4.500" y="12" width="2" height="3" fill="#555"/><path d="M9 3l6-3v5l-3 3H9z" fill="#1f7a3a"/></svg></div>
          <div class="ml-[10px] w-[25px] h-[21px] bg-[#cce4f7] flex items-center justify-center"><svg class="w-4 h-4" viewBox="0 0 16 16"><ellipse cx="3.500" cy="2" rx="3" ry="1.500" fill="#777"/><path d="M.5 5h6M.5 8h6" stroke="#777" stroke-width="1.500"/><path d="M3.500 10v4h2" fill="none" stroke="#333"/><path d="M8 5h5l2 2v8H8z" fill="#fff" stroke="#333"/><path d="M9.500 9h4M9.500 11h4M9.500 13h4" stroke="#333"/></svg></div>
          <div class="ml-auto flex gap-[10px] mt-[1px]">
            <button class="w-[81px] h-[21px] bg-[#e1e1e1] border-2 border-[#0078d7]">OK</button>
            <button class="w-[81px] h-[21px] bg-[#e1e1e1] border-2 border-[#b0b0b0]">Storno</button>
            <button class="w-[81px] h-[21px] bg-[#e1e1e1] border-2 border-[#b0b0b0]">Použít</button>
          </div>
          <svg class="absolute right-[2px] bottom-[2px] w-[8px] h-[8px]" viewBox="0 0 8 8"><path d="M6 0h2v2H6zM3 3h2v2H3zM6 3h2v2H6zM0 6h2v2H0zM3 6h2v2H3zM6 6h2v2H6z" fill="#b5b5b5"/></svg>
        </div>
      </div>

      <!-- red callouts laid over the screenshot -->
      <svg class="absolute -left-px -top-px w-[1399px] h-[1051px] pointer-events-none" viewBox="0 0 1399 1051">
        <rect x="86.500" y="51.500" width="29" height="27" fill="none" stroke="#ee1c25" stroke-width="3"/>
        <rect x="433.500" y="455.500" width="404" height="139" fill="none" stroke="#ee1c25" stroke-width="3"/>
        <path d="M120 87L466 428" stroke="#ee1c25" stroke-width="5"/>
        <path d="M482 444L457 434L473 419z" fill="#ee1c25"/>
      </svg>
    </div>
  </body>
</html>
